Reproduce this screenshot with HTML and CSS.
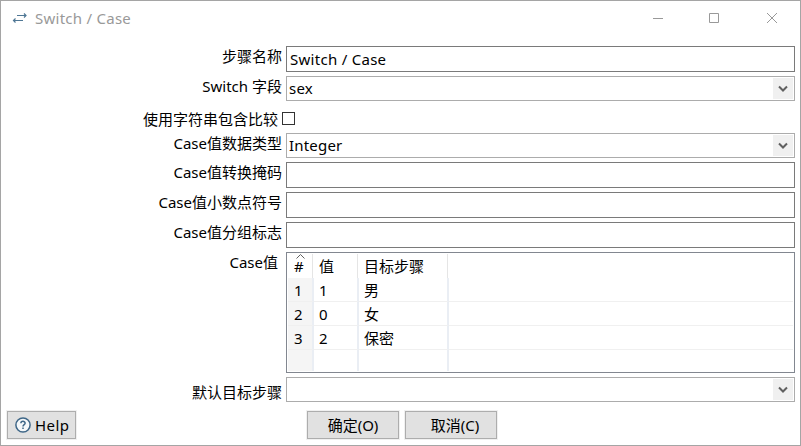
FILE: index.html
```html
<!DOCTYPE html>
<html lang="zh-CN">
<head>
<meta charset="utf-8">
<title>Switch / Case</title>
<link rel="stylesheet" href="styles.css">
</head>
<body>
<main class="window">
  <header class="titlebar">
    <svg class="app-icon" width="16" height="12" viewBox="0 0 16 12"><path d="M5 3.500h9M12 1.500l2 2L12 5.500M11 8.500H1.500M3.500 6.500L1.500 8.500L3.500 10.500"/></svg>
    <h1>Switch / Case</h1>
    <div class="controls">
      <svg width="12" height="12" viewBox="0 0 12 12"><path d="M1 6.500h10"/></svg>
      <svg width="12" height="12" viewBox="0 0 12 12"><path d="M1.500 1.500h9v9h-9z"/></svg>
      <svg width="12" height="12" viewBox="0 0 12 12"><path d="M1 1l10 10M11 1L1 11"/></svg>
    </div>
  </header>
  <section class="form">
    <div class="row"><label>步骤名称</label><div class="input">Switch / Case</div></div>
    <div class="row"><label>Switch 字段</label><div class="combo"><span>sex</span><i><svg width="10" height="8" viewBox="0 0 10 8"><path d="M1 1.500l4 4l4-4"/></svg></i></div></div>
    <div class="row check"><label>使用字符串包含比较</label><div class="checkbox"></div></div>
    <div class="row"><label>Case值数据类型</label><div class="combo"><span>Integer</span><i><svg width="10" height="8" viewBox="0 0 10 8"><path d="M1 1.500l4 4l4-4"/></svg></i></div></div>
    <div class="row"><label>Case值转换掩码</label><div class="input"></div></div>
    <div class="row"><label>Case值小数点符号</label><div class="input"></div></div>
    <div class="row"><label>Case值分组标志</label><div class="input"></div></div>
    <div class="row wide"><label>Case值</label>
      <div class="table">
        <div class="tr head"><div class="num"><svg class="sort" width="9" height="5" viewBox="0 0 9 5"><path d="M.5 4.500l4-4l4 4"/></svg>#</div><div>值</div><div>目标步骤</div><div></div></div>
        <div class="tr"><div class="num">1</div><div>1</div><div>男</div><div></div></div>
        <div class="tr"><div class="num">2</div><div>0</div><div>女</div><div></div></div>
        <div class="tr"><div class="num">3</div><div>2</div><div>保密</div><div></div></div>
        <div class="tr last"><div class="num"></div><div></div><div></div><div></div></div>
      </div>
    </div>
    <div class="row default"><label>默认目标步骤</label><div class="combo"><span></span><i><svg width="10" height="8" viewBox="0 0 10 8"><path d="M1 1.500l4 4l4-4"/></svg></i></div></div>
  </section>
  <footer class="actions">
    <button class="help"><svg width="16" height="16" viewBox="0 0 16 16"><circle cx="8" cy="8" r="7.100"/><path d="M5.900 6.300C5.900 3.700 10.100 3.700 10.100 6.200C10.100 7.700 8 7.700 8 9.500M8 10.600v1.500"/></svg>Help</button>
    <button class="ok">确定(O)</button>
    <button class="cancel">取消(C)</button>
  </footer>
</main>
</body>
</html>
```
FILE: styles.css
```css
* { box-sizing: border-box; }
body {
  margin: 0;
  font: 15px/22px "Noto Sans", "Noto Sans CJK SC", sans-serif;
  color: #000;
}
.window {
  width: 801px;
  height: 446px;
  border: 1px solid #a5a5a5;
  background: #fff;
  overflow: hidden;
}
.titlebar {
  height: 45px;
  display: flex;
  align-items: flex-start;
  padding: 6px 22px 0 11px;
}
.app-icon {
  margin-top: 5px;
  fill: none;
  stroke: #4f7795;
  stroke-width: 1.2;
}
h1 {
  margin: 0 0 0 7px;
  font: inherit;
  color: #999;
  letter-spacing: .26px;
}
.controls {
  margin-left: auto;
  padding-top: 5px;
  display: flex;
  gap: 44px;
}
.controls svg:last-child { margin-left: 2px; }
.controls svg { fill: none; stroke: #999; }
.form {
  display: flex;
  flex-direction: column;
  gap: 4px;
  padding-right: 5px;
}
.row {
  display: grid;
  grid-template-columns: 281px 509px;
  column-gap: 4px;
  align-items: start;
}
label {
  text-align: right;
  white-space: nowrap;
  margin-top: -1px;
}
.input {
  height: 26px;
  border: 1px solid #7a7a7a;
  padding: 1px 3px;
  letter-spacing: .28px;
}
.combo {
  height: 25px;
  border: 1px solid #acacac;
  padding: 1px 1px 1px 2px;
  display: flex;
  justify-content: space-between;
  letter-spacing: .2px;
}
.combo span { margin-top: -1px; }
.combo i {
  width: 20px;
  height: 21px;
  background: #f0f0f0;
  display: flex;
  align-items: center;
  justify-content: center;
}
.combo svg { fill: none; stroke: #606060; stroke-width: 2; }
.check { height: 24px; grid-template-columns: 277px 13px; padding-top: 4px; }
.checkbox {
  width: 13px;
  height: 13px;
  margin-top: 3px;
  border: 1px solid #333;
}
.wide label { padding-right: 4px; }
.default label { padding-top: 5px; height: 25px; }
.table {
  height: 121px;
  border: 1px solid #828790;
  padding: 1px;
}
.tr {
  display: grid;
  grid-template-columns: 26px 45px 90px 1fr;
  height: 24px;
}
.tr > div {
  padding: 1px 0 0 5px;
  border-right: 2px solid #eaeef4;
  border-bottom: 1px solid #f0f0f0;
}
.tr > div.num { padding-left: 6px; background: #f5f5f5; }
.tr > div:last-child { border-right: 0; }
.tr.head { grid-template-columns: 25px 45px 90px 1fr; }
.tr.head > div {
  border-right: 1px solid #e5e5e5;
  border-bottom: 0;
  padding-left: 6px;
}
.tr.head > div.num { background: #fff; position: relative; }
.tr.head > div:last-child { border-right: 0; }
.tr.last { height: 21px; }
.tr.last > div { border-bottom: 0; }
.sort {
  position: absolute;
  left: 8px;
  top: 0;
  fill: none;
  stroke: #606060;
}
.actions {
  display: flex;
  padding: 9px 0 0 6px;
}
button {
  height: 28px;
  border: 1px solid #adadad;
  border-radius: 0;
  outline: 1px solid #f0f0f0;
  background: #e1e1e1;
  padding: 0;
  font: inherit;
  color: #000;
}
.help {
  width: 69px;
  display: flex;
  align-items: center;
  padding-left: 7px;
  gap: 4px;
  letter-spacing: .4px;
}
.help svg { fill: #f5f8fa; stroke: #3f6788; stroke-width: 1.500; }
.ok { width: 92px; margin-left: 231px; }
.cancel { width: 92px; margin-left: 6px; padding-left: 8px; }
```
